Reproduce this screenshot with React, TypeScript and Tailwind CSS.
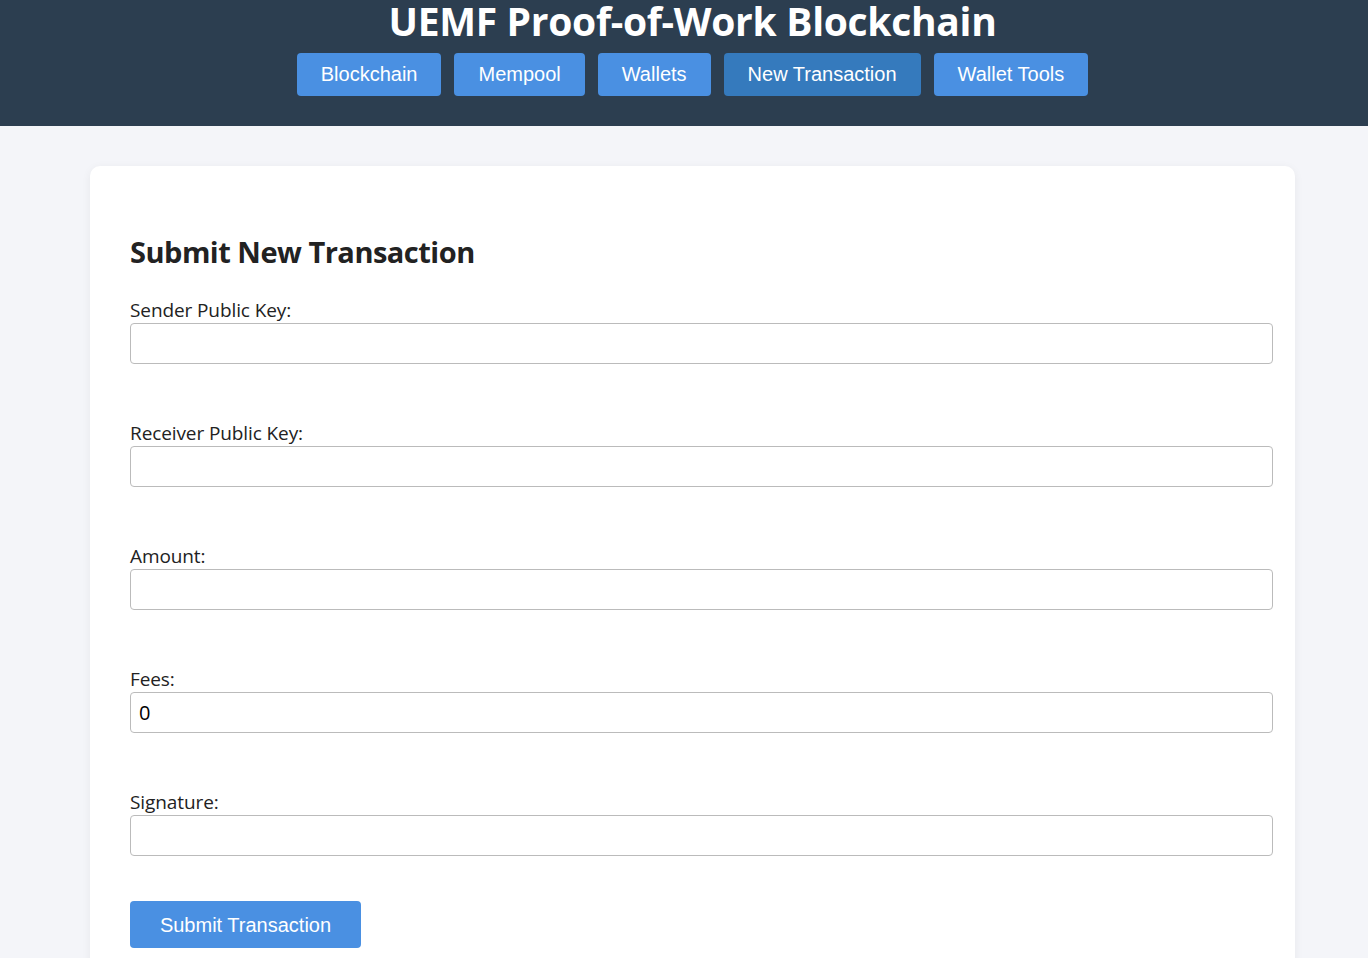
import React, { useState } from "react";

const navItems = ["Blockchain", "Mempool", "Wallets", "New Transaction", "Wallet Tools"];

const fields = [
  { label: "Sender Public Key:", key: "sender" },
  { label: "Receiver Public Key:", key: "receiver" },
  { label: "Amount:", key: "amount" },
  { label: "Fees:", key: "fees" },
  { label: "Signature:", key: "signature" },
];

const App: React.FC = () => {
  const [values, setValues] = useState<Record<string, string>>({
    sender: "",
    receiver: "",
    amount: "",
    fees: "0",
    signature: "",
  });

  return (
    <div className="min-h-screen bg-[#f4f5f9] font-['Open_Sans',sans-serif] text-[#222]">
      <header className="bg-[#2c3e50] h-[126px] flex flex-col items-center overflow-hidden pl-[17px]">
        <h1 className="text-white font-bold text-[39px] leading-[48px] mt-[-3px] tracking-[-0.3px]">
          UEMF Proof-of-Work Blockchain
        </h1>
        <nav className="flex gap-[13px] mt-[8px]">
          {navItems.map((item) => (
            <button
              key={item}
              type="button"
              className={`h-[43px] px-6 pb-[2px] rounded-[4px] text-white text-[20px] font-['Liberation_Sans',Arial,sans-serif] ${
                item === "New Transaction" ? "bg-[#357abd]" : "bg-[#4a90e2]"
              }`}
            >
              {item}
            </button>
          ))}
        </nav>
      </header>

      <main className="px-[90px] pt-10">
        <div className="bg-white rounded-[10px] shadow-[0_2px_10px_rgba(0,0,0,0.06)] px-10 pt-[66px] pb-10 w-[1205px]">
          <h2 className="text-[29px] font-bold leading-[40px] mb-[26px] tracking-[-0.5px]">Submit New Transaction</h2>
          <form className="flex flex-col">
            <div className="flex flex-col gap-[57px]">
              {fields.map((f) => (
                <div key={f.key}>
                  <label className="block text-[19px] leading-[25px] text-[#222] tracking-[-0.1px]">{f.label}</label>
                  <input
                    type="text"
                    value={values[f.key]}
                    onChange={(e) => setValues((prev) => ({ ...prev, [f.key]: e.target.value }))}
                    className="block w-[1143px] h-[41px] px-2 border border-[#bbb] rounded-[4px] text-[20px] text-black"
                  />
                </div>
              ))}
            </div>
            <button
              type="button"
              className="mt-[45px] w-[231px] h-[47px] bg-[#4a90e2] text-white rounded-[4px] text-[20px] font-['Liberation_Sans',Arial,sans-serif]"
            >
              Submit Transaction
            </button>
          </form>
        </div>
      </main>
    </div>
  );
};

export default App;
